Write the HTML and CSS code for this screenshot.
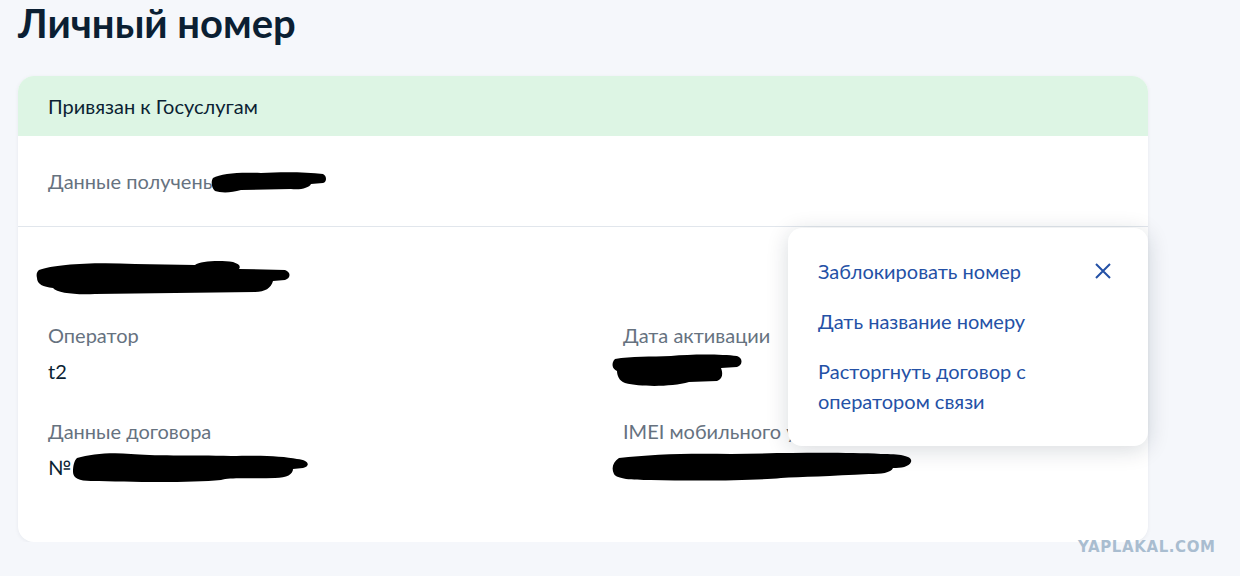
FILE: index.html
```html
<!DOCTYPE html>
<html lang="ru">

<head>
  <meta charset="UTF-8">
  <meta name="viewport" content="width=device-width, initial-scale=1.0">
  <title>Личный номер</title>
  <link rel="stylesheet" href="styles.css">
</head>

<body>
  <div class="page">
    <h1 class="page-title">Личный номер</h1>

    <div class="card">
      <div class="card-status">Привязан к Госуслугам</div>

      <div class="card-row">
        <span class="muted">Данные получены</span>
        <svg class="redact" width="116" height="26" viewBox="0 0 116 26">
          <path d="M2 9 C10 4 30 3 50 4 C70 3 95 3 112 5 C116 7 116 13 112 14 L100 15 C98 19 90 21 80 20 L30 21 C20 24 10 24 4 22 C0 18 0 12 2 9 Z" />
        </svg>
      </div>

      <div class="card-details">
        <svg class="redact redact-phone" width="258" height="38" viewBox="0 0 258 38">
          <path d="M4 12 C20 6 60 4 100 6 L160 7 C165 3 185 2 198 4 C204 6 206 8 204 11 L250 12 C256 14 256 20 250 22 L238 23 C236 30 230 34 220 34 L60 36 C40 37 22 35 18 30 C8 29 2 26 2 20 C1 16 2 14 4 12 Z" />
        </svg>

        <div class="details-grid">
          <div class="field">
            <div class="field-label">Оператор</div>
            <div class="field-value">t2</div>
          </div>
          <div class="field">
            <div class="field-label">Дата активации</div>
            <div class="field-value">
              <svg class="redact" width="132" height="36" viewBox="0 0 132 36">
                <path d="M4 6 C20 3 40 4 60 3 C80 1 110 1 126 3 C132 5 132 12 126 14 L110 15 C112 20 112 26 106 28 L78 29 C60 34 30 34 14 30 C8 28 6 22 6 18 C1 16 0 10 4 6 Z" />
              </svg>
            </div>
          </div>
          <div class="field">
            <div class="field-label">Данные договора</div>
            <div class="field-value">№
              <svg class="redact" width="240" height="34" viewBox="0 0 240 34">
                <path d="M6 8 C20 4 40 2 60 4 C80 6 120 5 160 6 C190 5 212 6 226 9 C238 10 240 16 232 18 L222 19 C222 24 216 28 204 28 C180 29 160 27 150 30 C120 33 60 32 20 31 C8 31 2 28 2 22 C2 16 3 11 6 8 Z" />
              </svg>
            </div>
          </div>
          <div class="field">
            <div class="field-label">IMEI мобильного устройства</div>
            <div class="field-value">
              <svg class="redact" width="302" height="34" viewBox="0 0 302 34">
                <path d="M8 8 C40 4 80 3 120 4 C170 3 230 2 270 4 C290 4 302 6 300 12 C298 17 290 18 282 18 C280 23 270 24 258 24 C220 26 190 27 170 28 C140 31 80 31 40 30 C20 30 6 29 3 24 C0 18 2 12 8 8 Z" />
              </svg>
            </div>
          </div>
        </div>
      </div>

      <div class="actions-menu">
        <button class="menu-close" aria-label="Закрыть">
          <svg width="18" height="18" viewBox="0 0 18 18">
            <path d="M2 2 L16 16 M16 2 L2 16" />
          </svg>
        </button>
        <a class="menu-link" href="#">Заблокировать номер</a>
        <a class="menu-link" href="#">Дать название номеру</a>
        <a class="menu-link" href="#">Расторгнуть договор с<br>оператором связи</a>
      </div>
    </div>
  </div>

  <div class="watermark">YAPLAKAL.COM</div>
</body>

</html>
```

FILE: styles.css
```css
/* Base styles */
body {
  font-family: Lato, "Noto Sans", sans-serif;
  margin: 0;
  padding: 0;
  background-color: #f5f7fb;
  color: #0b1f33;
  overflow: hidden;
}

.page {
  padding: 0 92px 0 18px;
}

.page-title {
  margin: 0;
  font-size: 40px;
  line-height: 46px;
  font-weight: 700;
  color: #0b1f33;
}

/* Card */
.card {
  position: relative;
  margin-top: 30px;
  background-color: #fff;
  border-radius: 16px;
  box-shadow: 0 1px 4px rgba(11, 31, 51, 0.06);
}

.card-status {
  height: 60px;
  display: flex;
  align-items: center;
  padding: 0 30px;
  background-color: #ddf5e4;
  border-radius: 16px 16px 0 0;
  font-size: 20px;
}

.card-row {
  height: 90px;
  display: flex;
  align-items: center;
  padding: 0 30px;
  border-bottom: 1px solid #e1e6ec;
  font-size: 20px;
}

.muted {
  color: #66727f;
}

.redact {
  display: inline-block;
  fill: #000;
  vertical-align: middle;
}

.card-row .redact {
  margin-left: -6px;
  margin-top: 2px;
}

.card-details {
  padding: 31px 30px 61px 30px;
}

.redact-phone {
  display: block;
  margin-left: -13px;
}

.details-grid {
  display: grid;
  grid-template-columns: 575px 1fr;
  row-gap: 32px;
  margin-top: 25px;
}

.field-label {
  font-size: 20px;
  line-height: 28px;
  color: #66727f;
}

.field-value {
  margin-top: 8px;
  font-size: 20px;
  line-height: 28px;
  height: 28px;
  display: flex;
  align-items: center;
}

.field-value .redact {
  margin-left: -12px;
}

.field:nth-child(3) .field-value .redact {
  margin-left: 0;
}

/* Actions popup */
.actions-menu {
  position: absolute;
  top: 152px;
  right: 0;
  width: 300px;
  padding: 28px 30px 30px 30px;
  background-color: #fff;
  border-radius: 14px;
  box-shadow: 0 4px 22px rgba(11, 31, 51, 0.16);
  display: flex;
  flex-direction: column;
  gap: 20px;
}

.menu-link {
  font-size: 20px;
  line-height: 30px;
  color: #2451a6;
  text-decoration: none;
}

.menu-close {
  position: absolute;
  top: 34px;
  right: 36px;
  padding: 0;
  border: none;
  background: none;
  cursor: pointer;
  width: 18px;
  height: 18px;
}

.menu-close svg {
  display: block;
  stroke: #2451a6;
  stroke-width: 2;
  fill: none;
}

.watermark {
  position: absolute;
  left: 1078px;
  top: 538px;
  font-family: "DejaVu Sans", sans-serif;
  font-weight: 700;
  font-size: 15px;
  letter-spacing: 0.6px;
  color: #a9bdd0;
}
```
